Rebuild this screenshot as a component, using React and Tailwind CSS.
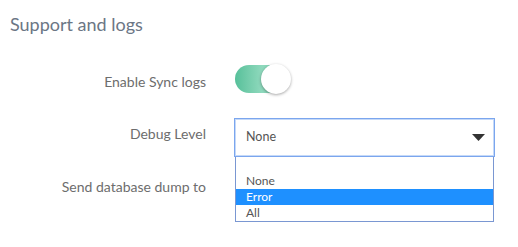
export default function App() {
  return (
    <div
      className="w-[518px] h-[247px] bg-white relative overflow-hidden"
      style={{ fontFamily: "Lato, 'Noto Sans', sans-serif" }}
    >
      <div className="pl-[10px] pt-[13px] text-[18px] leading-[22px] text-[#6b7685]">
        Support and logs
      </div>

      <div className="mt-[27px] flex h-[34px] items-start">
        <div className="w-[206px] pt-[10px] text-right text-[14px] leading-[20px] text-[#6d6d6d]">
          Enable Sync logs
        </div>
        <div className="ml-[29px] mt-[2px] relative h-[30px] w-[56px]">
          <div className="absolute left-0 top-[1px] h-[28px] w-[54px] rounded-full bg-gradient-to-r from-[#56c09a] via-[#8fd9bd] to-[#6ccdaa]" />
          <div className="absolute right-0 top-0 h-[30px] w-[30px] rounded-full bg-white shadow-[0_1px_3px_rgba(0,0,0,0.35)]" />
        </div>
      </div>

      <div className="mt-[22px] flex items-start">
        <div className="w-[206px] pt-[6px] text-right text-[14px] leading-[20px] text-[#6d6d6d]">
          Debug Level
        </div>
        <div className="ml-[28px] relative">
          <div className="flex h-[39px] w-[261px] items-center justify-between border border-[#7ba6ee] pl-[11px] pr-[9px] shadow-[0_0_0_1px_#c5d9f8_inset]">
            <span className="text-[12.5px] text-[#555555]">None</span>
            <svg width="13" height="7" viewBox="0 0 13 7">
              <path d="M0 0 L13 0 L6.5 7 Z" fill="#333333" />
            </svg>
          </div>
          <div className="absolute left-[1px] top-[39px] w-[259px] border border-t-0 border-[#7a97d2] bg-white text-[12px] leading-[16px] text-[#555555]">
            <div className="h-[16px]" />
            <div className="h-[16px] pl-[10px]">None</div>
            <div className="h-[16px] pl-[10px] bg-[#1e90ff] text-white">Error</div>
            <div className="h-[16px] pl-[10px]">All</div>
          </div>
        </div>
      </div>

      <div className="mt-[20px] flex">
        <div className="w-[206px] text-right text-[14px] leading-[20px] text-[#6d6d6d]">
          Send database dump to
        </div>
      </div>
    </div>
  );
}
